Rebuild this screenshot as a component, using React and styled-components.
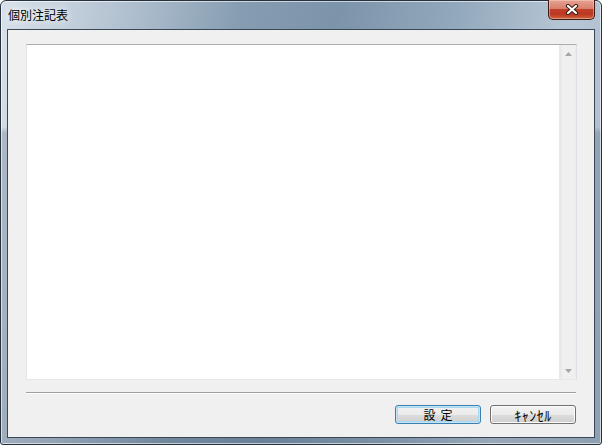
import React from "react";
import styled, { createGlobalStyle } from "styled-components";

const GlobalStyle = createGlobalStyle`
  html, body {
    margin: 0;
    padding: 0;
    background: #ffffff;
  }
  body {
    font-family: "Noto Sans CJK JP", "Noto Sans", sans-serif;
  }
`;

function App() {
  return (
    <>
      <GlobalStyle />
      <Window>
        <TitleBar>
          <Title>個別注記表</Title>
          <CloseButton>
            <svg width="14" height="11" viewBox="0 0 14 11">
              <path d="M3 2 L11 9 M11 2 L3 9" stroke="#3a1c16" strokeWidth="4.2" strokeLinecap="round" />
              <path d="M3 2 L11 9 M11 2 L3 9" stroke="#ffffff" strokeWidth="2.2" strokeLinecap="round" />
            </svg>
          </CloseButton>
        </TitleBar>

        <Client>
          <Memo>
            <Scrollbar>
              <ArrowButton>
                <svg width="7" height="4" viewBox="0 0 7 4">
                  <path d="M3.5 0 L7 4 L0 4 Z" fill="#a6a6a6" />
                </svg>
              </ArrowButton>
              <ArrowButton>
                <svg width="7" height="4" viewBox="0 0 7 4">
                  <path d="M0 0 L7 0 L3.5 4 Z" fill="#a6a6a6" />
                </svg>
              </ArrowButton>
            </Scrollbar>
          </Memo>
          <Separator />
          <ButtonRow>
            <DialogButton $default>
              <Spaced>設定</Spaced>
            </DialogButton>
            <DialogButton>
              <Narrow>ｷｬﾝｾﾙ</Narrow>
            </DialogButton>
          </ButtonRow>
        </Client>
      </Window>
    </>
  );
}

export default App;

const Window = styled.div`
  box-sizing: border-box;
  width: 602px;
  height: 445px;
  border: 1px solid #27313d;
  border-radius: 6px 6px 3px 3px;
  padding: 0 6px 6px 6px;
  display: flex;
  flex-direction: column;
  background:
    linear-gradient(
      to bottom,
      rgba(40, 60, 85, 0) 0,
      rgba(40, 60, 85, 0) 126px,
      rgba(40, 60, 85, 0.22) 132px,
      rgba(40, 60, 85, 0.22) 100%
    ),
    linear-gradient(
      100deg,
      #d8e1ea 0%,
      #b3c2d1 18%,
      #859cb1 36%,
      #7c94aa 50%,
      #93a9bd 68%,
      #b7c6d4 84%,
      #aabbcc 100%
    );
  box-shadow: inset 0 0 0 1px rgba(255, 255, 255, 0.6);
`;

const TitleBar = styled.div`
  height: 28px;
  display: flex;
  align-items: flex-start;
  justify-content: space-between;
`;

const Title = styled.span`
  font-size: 12px;
  line-height: 14px;
  margin: 7px 0 0 1px;
  color: #000000;
  text-shadow: 0 0 6px rgba(255, 255, 255, 0.9), 0 0 12px rgba(255, 255, 255, 0.7);
`;

const CloseButton = styled.div`
  box-sizing: border-box;
  width: 47px;
  height: 20px;
  margin-top: -1px;
  border: 1px solid #3d1a16;
  border-top: none;
  border-radius: 0 0 5px 5px;
  background: linear-gradient(
    to bottom,
    #e6a394 0%,
    #d7806c 45%,
    #c03f29 50%,
    #bb3823 75%,
    #d0633e 100%
  );
  box-shadow: inset 0 0 0 1px rgba(255, 215, 200, 0.45);
  display: flex;
  align-items: center;
  justify-content: center;
`;

const Client = styled.div`
  flex: 1;
  border: 1px solid #3a4756;
  background: #f0f0f0;
  padding: 14px 17px 13px 18px;
  display: flex;
  flex-direction: column;
`;

const Memo = styled.div`
  box-sizing: border-box;
  height: 336px;
  border: 1px solid;
  border-color: #abadb3 #dbdfe6 #e3e9ef #e2e3ea;
  background: #ffffff;
  display: flex;
  justify-content: flex-end;
`;

const Scrollbar = styled.div`
  width: 17px;
  display: flex;
  flex-direction: column;
  justify-content: space-between;
  background: linear-gradient(to right, #e6e6e6 0, #f0f0f0 3px, #f0f0f0 14px, #e9e9e9 17px);
  border-left: 1px solid #e8e8e8;
  box-sizing: border-box;
`;

const ArrowButton = styled.div`
  height: 17px;
  display: flex;
  align-items: center;
  justify-content: center;
`;

const Separator = styled.div`
  margin: 12px 1px 0 0;
  border-top: 1px solid #a0a0a0;
  border-bottom: 1px solid #ffffff;
`;

const ButtonRow = styled.div`
  display: flex;
  justify-content: flex-end;
  gap: 9px;
  margin-top: 11px;
  padding-right: 1px;
`;

const DialogButton = styled.div`
  box-sizing: border-box;
  width: 86px;
  height: 19px;
  border: 1px solid ${(p) => (p.$default ? "#3c7fb1" : "#707070")};
  border-radius: 3px;
  background: linear-gradient(to bottom, #f2f2f2 0%, #ebebeb 50%, #dddddd 51%, #cfcfcf 100%);
  box-shadow: ${(p) =>
    p.$default
      ? "inset 0 0 0 1px #c4e5f6, inset 0 0 0 2px #a7d8f2"
      : "inset 0 0 0 1px #fcfcfc"};
  display: flex;
  align-items: center;
  justify-content: center;
  font-size: 12px;
  line-height: 14px;
  color: #000000;
`;

const Spaced = styled.span`
  letter-spacing: 5px;
  margin-right: -5px;
`;

const Narrow = styled.span`
  font-size: 14px;
  letter-spacing: 0.5px;
`;
